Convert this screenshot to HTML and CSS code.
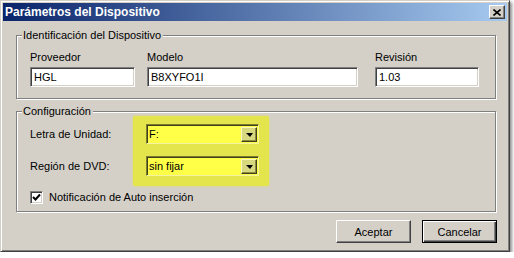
FILE: index.html
```html
<!DOCTYPE html>
<html lang="es">
<head>
  <meta charset="UTF-8" />
  <title>Parámetros del Dispositivo</title>
  <link rel="stylesheet" href="styles.css">
</head>
<body>

  <!-- ventana de diálogo -->
  <div class="window">
    <div class="titlebar">
      <span class="title">Parámetros del Dispositivo</span>
      <span class="close">
        <svg width="8" height="7" viewBox="0 0 8 7">
          <path d="M0.5 0.5 L7.5 6.5 M7.5 0.5 L0.5 6.5" stroke="#000" stroke-width="1.6" fill="none"/>
        </svg>
      </span>
    </div>

    <div class="content">
      <!-- identificación -->
      <fieldset class="group">
        <legend>Identificación del Dispositivo</legend>
        <div class="ident">
          <div class="field">
            <label>Proveedor</label>
            <div class="input w-prov">HGL</div>
          </div>
          <div class="field">
            <label>Modelo</label>
            <div class="input w-model">B8XYFO1I</div>
          </div>
          <div class="field rev">
            <label>Revisión</label>
            <div class="input w-rev">1.03</div>
          </div>
        </div>
      </fieldset>

      <!-- configuración -->
      <fieldset class="group config">
        <legend>Configuración</legend>
        <div class="config-rows">
          <div class="labels">
            <div class="row-label">Letra de Unidad:</div>
            <div class="row-label">Región de DVD:</div>
          </div>
          <div class="highlight">
            <div class="select">
              <span class="value">F:</span>
              <span class="arrow"><i></i></span>
            </div>
            <div class="select">
              <span class="value">sin fijar</span>
              <span class="arrow"><i></i></span>
            </div>
          </div>
        </div>
        <div class="check-row">
          <span class="checkbox">
            <svg width="9" height="9" viewBox="0 0 9 9">
              <path d="M1 4 L3.5 6.5 L8 1.5" stroke="#000" stroke-width="2" fill="none"/>
            </svg>
          </span>
          <span>Notificación de Auto inserción</span>
        </div>
      </fieldset>

      <div class="buttons">
        <button class="btn">Aceptar</button>
        <button class="btn default">Cancelar</button>
      </div>
    </div>
  </div>

</body>
</html>
```

FILE: styles.css
```css
body {
  margin: 0;
  background-color: #fff;
  font-family: 'Liberation Sans', Arial, sans-serif;
  font-size: 11px;
  color: #000;
}
.window {
  width: 510px;
  box-sizing: border-box;
  background-color: #d4d0c8;
  border: 1px solid;
  border-color: #d4d0c8 #404040 #404040 #d4d0c8;
  box-shadow: inset 1px 1px 0 #fff, inset -1px -1px 0 #808080, 2px 2px 3px rgba(0, 0, 0, 0.45);
  padding: 2px;
}
.titlebar {
  height: 18px;
  display: flex;
  align-items: center;
  justify-content: space-between;
  padding: 0 2px 0 2px;
  background: linear-gradient(to right, #0a246a, #a6caf0);
}
.title {
  color: #fff;
  font-weight: bold;
  font-size: 12px;
}
.close {
  width: 16px;
  height: 14px;
  box-sizing: border-box;
  display: flex;
  align-items: center;
  justify-content: center;
  background-color: #d4d0c8;
  border: 1px solid;
  border-color: #fff #404040 #404040 #fff;
  box-shadow: inset -1px -1px 0 #808080;
}
.content {
  padding: 8px 11px 6px 13px;
}
.group {
  margin: 0;
  padding: 9px 12px 11px 13px;
  border: 1px solid #808080;
  box-shadow: 1px 1px 0 #fff, inset 1px 1px 0 #fff;
}
.group legend {
  padding: 0 2px 0 1px;
  margin-left: -8px;
  line-height: 13px;
  background-color: #d4d0c8;
}
.ident {
  display: flex;
  gap: 12px;
}
.field {
  display: flex;
  flex-direction: column;
  gap: 3px;
}
.field label { line-height: 13px; }
.field.rev { margin-left: 5px; }
.input {
  height: 20px;
  box-sizing: border-box;
  background-color: #fff;
  border: 1px solid;
  border-color: #808080 #fff #fff #808080;
  box-shadow: inset 1px 1px 0 #404040, inset -1px -1px 0 #d4d0c8;
  padding: 0 3px;
  line-height: 18px;
}
.w-prov { width: 105px; }
.w-model { width: 211px; }
.w-rev { width: 104px; }
.config {
  margin-top: 6px;
  padding-top: 0;
  padding-bottom: 7px;
}
.config-rows {
  display: flex;
  margin-top: -2px;
}
.labels {
  width: 103px;
  display: flex;
  flex-direction: column;
  gap: 12px;
  padding-top: 8px;
}
.row-label {
  height: 20px;
  line-height: 20px;
}
.highlight {
  display: flex;
  flex-direction: column;
  gap: 12px;
  padding: 8px 10px 10px 13px;
  background-color: #e4e44c;
  border-radius: 2px;
  box-shadow: 0 0 2px #e4e44c;
}
.select {
  width: 113px;
  height: 20px;
  box-sizing: border-box;
  display: flex;
  align-items: stretch;
  background-color: #ffff48;
  border: 1px solid;
  border-color: #7a7a30 #f4f4a0 #f4f4a0 #7a7a30;
  box-shadow: inset 1px 1px 0 #40401a;
}
.select .value {
  flex: 1;
  padding-left: 2px;
  line-height: 18px;
}
.arrow {
  width: 16px;
  margin: 2px 1px 1px 0;
  box-sizing: border-box;
  display: flex;
  align-items: center;
  justify-content: center;
  background-color: #d8d880;
  border: 1px solid;
  border-color: #f8f8c0 #40401a #40401a #f8f8c0;
  box-shadow: inset -1px -1px 0 #8a8a40;
}
.arrow i {
  width: 0;
  height: 0;
  border-left: 4px solid transparent;
  border-right: 3px solid transparent;
  border-top: 4px solid #000;
}
.check-row {
  display: flex;
  align-items: center;
  gap: 6px;
  margin-top: 5px;
  line-height: 13px;
}
.checkbox {
  width: 13px;
  height: 13px;
  box-sizing: border-box;
  display: flex;
  align-items: center;
  justify-content: center;
  background-color: #fff;
  border: 1px solid;
  border-color: #808080 #fff #fff #808080;
  box-shadow: inset 1px 1px 0 #404040, inset -1px -1px 0 #d4d0c8;
}
.buttons {
  display: flex;
  justify-content: flex-end;
  gap: 11px;
  margin-top: 8px;
  margin-right: -1px;
}
.btn {
  width: 75px;
  height: 23px;
  box-sizing: border-box;
  font-family: 'Liberation Sans', Arial, sans-serif;
  font-size: 11px;
  color: #000;
  background-color: #d4d0c8;
  border: 1px solid;
  border-color: #fff #404040 #404040 #fff;
  box-shadow: inset -1px -1px 0 #808080;
  padding: 0;
}
.btn.default {
  border: 1px solid #000;
  box-shadow: inset 1px 1px 0 #fff, inset -1px -1px 0 #404040, inset -2px -2px 0 #808080;
}
```
